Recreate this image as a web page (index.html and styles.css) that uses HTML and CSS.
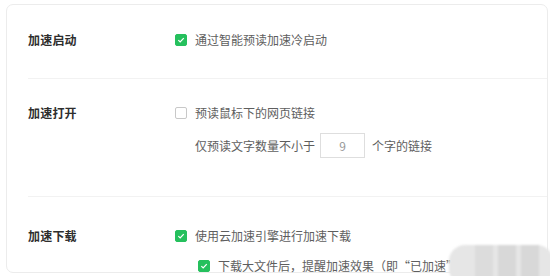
FILE: index.html
```html
<!DOCTYPE html>
<html lang="zh-CN">
<head>
<meta charset="utf-8">
<link rel="stylesheet" href="styles.css">
</head>
<body>
<div class="card">
  <div class="row row-start">
    <div class="label">加速启动</div>
    <div class="options">
      <div class="opt"><span class="cb on"><svg viewBox="0 0 12 12"><path d="M2.8 6.2 L5 8.3 L9.3 3.8" /></svg></span><span>通过智能预读加速冷启动</span></div>
    </div>
  </div>
  <div class="row row-open">
    <div class="label">加速打开</div>
    <div class="options">
      <div class="opt"><span class="cb"></span><span>预读鼠标下的网页链接</span></div>
      <div class="opt sub"><span>仅预读文字数量不小于</span><span class="num">9</span><span>个字的链接</span></div>
    </div>
  </div>
  <div class="row row-down">
    <div class="label">加速下载</div>
    <div class="options">
      <div class="opt"><span class="cb on"><svg viewBox="0 0 12 12"><path d="M2.8 6.2 L5 8.3 L9.3 3.8" /></svg></span><span>使用云加速引擎进行加速下载</span></div>
      <div class="opt sub2"><span class="cb on"><svg viewBox="0 0 12 12"><path d="M2.8 6.2 L5 8.3 L9.3 3.8" /></svg></span><span>下载大文件后，提醒加速效果（即“已加速”</span></div>
    </div>
  </div>
  <div class="blur"><span class="b1"></span><span class="b2"></span><span class="b3"></span></div>
</div>
</body>
</html>
```
FILE: styles.css
```css
html, body {
  margin: 0;
  padding: 0;
  background: #fff;
  overflow: hidden;
}
body {
  width: 550px;
  height: 276px;
  font-family: "Noto Sans CJK SC", "Noto Sans", sans-serif;
  font-size: 12px;
  color: #555;
}
.card {
  position: relative;
  margin: 4px 2px 0 6px;
  height: 269px;
  border: 1px solid #ececec;
  border-radius: 7px;
  box-sizing: border-box;
}
.row {
  display: grid;
  grid-template-columns: 147px 1fr;
  margin-left: 21px;
}
.row + .row {
  border-top: 1px solid #f2f2f2;
}
.row-start { padding: 25px 0 28px; }
.row-open { padding: 24px 0 38px; }
.row-down { padding: 29px 0 0; }
.label {
  font-weight: 700;
  color: #2e2e2e;
  line-height: 20px;
  letter-spacing: 0.2px;
}
.options {
  display: flex;
  flex-direction: column;
}
.opt {
  display: flex;
  align-items: center;
  height: 20px;
  line-height: 20px;
  white-space: nowrap;
  color: #5e5e5e;
}
.cb {
  width: 12px;
  height: 12px;
  box-sizing: border-box;
  border: 1px solid #c8c8c8;
  border-radius: 2px;
  margin-right: 8px;
  background: #fff;
  display: flex;
  flex: none;
}
.cb.on {
  background: #25c05d;
  border-color: #25c05d;
}
.cb svg {
  width: 10px;
  height: 10px;
  fill: none;
  stroke: #fff;
  stroke-width: 1.5;
}
.sub {
  margin-top: 10px;
  padding-left: 20px;
  height: 25px;
}
.num {
  width: 45px;
  height: 25px;
  box-sizing: border-box;
  border: 1px solid #dedede;
  margin: 0 7px 0 5px;
  text-align: center;
  line-height: 23px;
  color: #999;
}
.sub2 {
  margin-top: 10px;
  padding-left: 23px;
}
.blur {
  position: absolute;
  left: 442px;
  top: 240px;
  width: 104px;
  height: 40px;
  border-radius: 16px;
  background: #e6e6e6;
  display: flex;
  gap: 5px;
  padding: 0 14px 0 26px;
  box-sizing: border-box;
  filter: blur(1px);
}
.blur span {
  flex: 1;
  background: #d8d8d8;
}
.blur .b1 { background: #dcdcdc; }
```
